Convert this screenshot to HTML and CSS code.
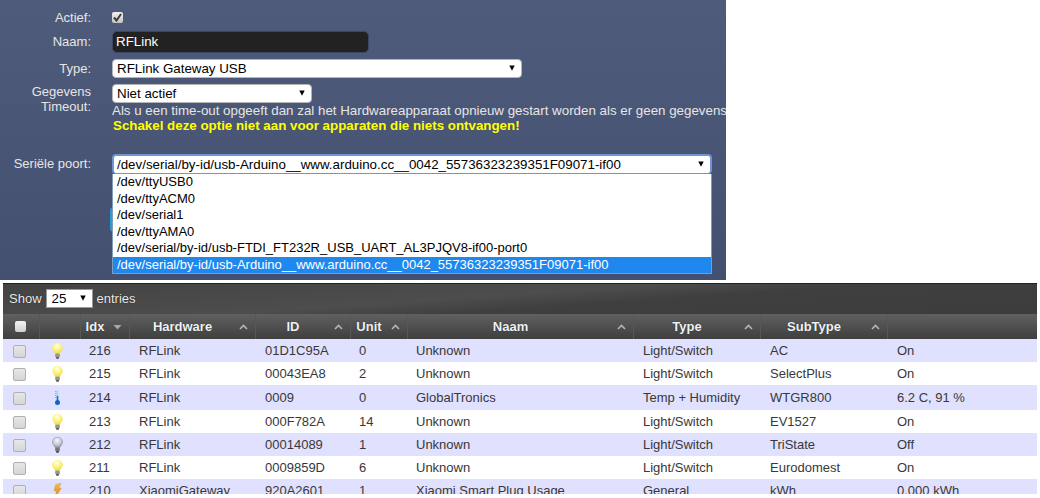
FILE: index.html
```html
<!DOCTYPE html>
<html lang="nl">
<head>
    <meta charset="UTF-8">
    <title>Hardware</title>
    <link rel="stylesheet" href="styles.css">
</head>
<body>
    <svg class="defs" width="0" height="0">
        <defs>
            <radialGradient id="glow-on" cx="45%" cy="30%" r="70%">
                <stop offset="0" stop-color="#fffff2"/>
                <stop offset="0.5" stop-color="#fdf583"/>
                <stop offset="1" stop-color="#efdc3c"/>
            </radialGradient>
            <radialGradient id="glow-off" cx="45%" cy="30%" r="70%">
                <stop offset="0" stop-color="#f4f5f8"/>
                <stop offset="0.6" stop-color="#c9ccd6"/>
                <stop offset="1" stop-color="#9296a6"/>
            </radialGradient>
            <linearGradient id="bolt-fill" x1="0" y1="0" x2="0" y2="1">
                <stop offset="0" stop-color="#f4c04a"/>
                <stop offset="1" stop-color="#e8701a"/>
            </linearGradient>
            <symbol id="bulb-on" viewBox="0 0 11 16">
                <path d="M5.5 0C2.4 0 0.3 2.2 0.3 5 0.3 7.2 2.2 8.4 3.1 10.5H7.9C8.8 8.4 10.7 7.2 10.7 5 10.7 2.2 8.6 0 5.5 0Z" fill="url(#glow-on)"/>
                <rect x="3.2" y="10.5" width="4.6" height="3.7" rx="0.6" fill="#96968a"/>
                <rect x="4" y="14" width="3" height="1.8" rx="0.7" fill="#55554f"/>
            </symbol>
            <symbol id="bulb-off" viewBox="0 0 11 16">
                <path d="M5.5 0.3C2.4 0.3 0.5 2.4 0.5 5 0.5 7.2 2.2 8.4 3.1 10.5H7.9C8.8 8.4 10.5 7.2 10.5 5 10.5 2.4 8.6 0.3 5.5 0.3Z" fill="url(#glow-off)" stroke="#8b8f9c" stroke-width="0.6"/>
                <rect x="3.2" y="10.5" width="4.6" height="3.7" rx="0.6" fill="#74747c"/>
                <rect x="4" y="14" width="3" height="1.8" rx="0.7" fill="#44444a"/>
            </symbol>
            <symbol id="thermo" viewBox="0 0 11 16">
                <rect x="4.7" y="0.5" width="1.6" height="10" fill="#b4d4ee"/>
                <rect x="4.7" y="6" width="1.6" height="5" fill="#1a72c8"/>
                <path d="M3 1.5H4.5M3 3.5H4.5M3 5.5H4.5M3 7.5H4.5" stroke="#6ba5da" stroke-width="0.8"/>
                <circle cx="5.5" cy="12.4" r="2.5" fill="#1265b8"/>
            </symbol>
            <symbol id="bolt" viewBox="0 0 11 16">
                <path d="M3.5 1.5 9 0 7 5H9.5L3 15 4.4 8H2Z" fill="url(#bolt-fill)" stroke="#bfae5a" stroke-width="0.5"/>
            </symbol>
            <symbol id="arrow" viewBox="0 0 6 6">
                <path d="M0.3 0.4H5.7L3 5.8Z" fill="#000"/>
            </symbol>
            <symbol id="sort-up" viewBox="0 0 9 6">
                <path d="M1 5 4.5 1.5 8 5" fill="none" stroke="#b4b4b4" stroke-width="1.6"/>
            </symbol>
            <symbol id="sort-down" viewBox="0 0 9 6">
                <path d="M0.5 1H8.5L4.5 5.5Z" fill="#a8a8a8"/>
            </symbol>
        </defs>
    </svg>

    <div class="form-panel">
        <div class="row row-active">
            <div class="label">Actief:</div>
            <div class="field"><span class="check"><svg width="9" height="9" viewBox="0 0 9 9"><path d="M1 4.5 3.5 7.5 8 1" fill="none" stroke="#3c3c3c" stroke-width="2"/></svg></span></div>
        </div>
        <div class="row row-name">
            <div class="label">Naam:</div>
            <div class="field"><div class="text-input">RFLink</div></div>
        </div>
        <div class="row row-type">
            <div class="label">Type:</div>
            <div class="field"><div class="select select-type">RFLink Gateway USB<svg class="select-arrow"><use href="#arrow"/></svg></div></div>
        </div>
        <div class="row row-timeout">
            <div class="label">Gegevens<br>Timeout:</div>
            <div class="field">
                <div class="select select-timeout">Niet actief<svg class="select-arrow"><use href="#arrow"/></svg></div>
                <p class="help">Als u een time-out opgeeft dan zal het Hardwareapparaat opnieuw gestart worden als er geen gegevens</p>
                <p class="warning">Schakel deze optie niet aan voor apparaten die niets ontvangen!</p>
            </div>
        </div>
        <div class="row row-port">
            <div class="label">Seriële poort:</div>
            <div class="field">
                <div class="select select-port">/dev/serial/by-id/usb-Arduino__www.arduino.cc__0042_55736323239351F09071-if00<svg class="select-arrow"><use href="#arrow"/></svg></div>
                <ul class="port-list">
                    <li>/dev/ttyUSB0</li>
                    <li>/dev/ttyACM0</li>
                    <li>/dev/serial1</li>
                    <li>/dev/ttyAMA0</li>
                    <li>/dev/serial/by-id/usb-FTDI_FT232R_USB_UART_AL3PJQV8-if00-port0</li>
                    <li class="selected">/dev/serial/by-id/usb-Arduino__www.arduino.cc__0042_55736323239351F09071-if00</li>
                </ul>
            </div>
        </div>
        <div class="action-btn"></div>
    </div>

    <div class="devices">
        <div class="toolbar">
            Show
            <div class="length-select">25<svg class="select-arrow"><use href="#arrow"/></svg></div>
            entries
        </div>
        <table>
            <colgroup>
                <col class="c-check"><col class="c-icon"><col class="c-idx"><col class="c-hw"><col class="c-id"><col class="c-unit"><col class="c-name"><col class="c-type"><col class="c-sub"><col>
            </colgroup>
            <thead>
                <tr>
                    <th class="th-check"><span class="head-check"></span></th>
                    <th></th>
                    <th><div class="th-in"><span>Idx</span><svg class="sort"><use href="#sort-down"/></svg></div></th>
                    <th><div class="th-in"><span>Hardware</span><svg class="sort"><use href="#sort-up"/></svg></div></th>
                    <th><div class="th-in"><span>ID</span><svg class="sort"><use href="#sort-up"/></svg></div></th>
                    <th><div class="th-in"><span>Unit</span><svg class="sort"><use href="#sort-up"/></svg></div></th>
                    <th><div class="th-in"><span>Naam</span><svg class="sort"><use href="#sort-up"/></svg></div></th>
                    <th><div class="th-in"><span>Type</span><svg class="sort"><use href="#sort-up"/></svg></div></th>
                    <th><div class="th-in"><span>SubType</span><svg class="sort"><use href="#sort-up"/></svg></div></th>
                    <th></th>
                </tr>
            </thead>
            <tbody>
                <tr class="odd">
                    <td><span class="box"></span></td><td><svg class="icon"><use href="#bulb-on"/></svg></td>
                    <td>216</td><td>RFLink</td><td>01D1C95A</td><td>0</td><td>Unknown</td><td>Light/Switch</td><td>AC</td><td>On</td>
                </tr>
                <tr>
                    <td><span class="box"></span></td><td><svg class="icon"><use href="#bulb-on"/></svg></td>
                    <td>215</td><td>RFLink</td><td>00043EA8</td><td>2</td><td>Unknown</td><td>Light/Switch</td><td>SelectPlus</td><td>On</td>
                </tr>
                <tr class="odd tall">
                    <td><span class="box"></span></td><td><svg class="icon"><use href="#thermo"/></svg></td>
                    <td>214</td><td>RFLink</td><td>0009</td><td>0</td><td>GlobalTronics</td><td>Temp + Humidity</td><td>WTGR800</td><td>6.2 C, 91 %</td>
                </tr>
                <tr>
                    <td><span class="box"></span></td><td><svg class="icon"><use href="#bulb-on"/></svg></td>
                    <td>213</td><td>RFLink</td><td>000F782A</td><td>14</td><td>Unknown</td><td>Light/Switch</td><td>EV1527</td><td>On</td>
                </tr>
                <tr class="odd">
                    <td><span class="box"></span></td><td><svg class="icon"><use href="#bulb-off"/></svg></td>
                    <td>212</td><td>RFLink</td><td>00014089</td><td>1</td><td>Unknown</td><td>Light/Switch</td><td>TriState</td><td>Off</td>
                </tr>
                <tr>
                    <td><span class="box"></span></td><td><svg class="icon"><use href="#bulb-on"/></svg></td>
                    <td>211</td><td>RFLink</td><td>0009859D</td><td>6</td><td>Unknown</td><td>Light/Switch</td><td>Eurodomest</td><td>On</td>
                </tr>
                <tr class="odd">
                    <td><span class="box"></span></td><td><svg class="icon"><use href="#bolt"/></svg></td>
                    <td>210</td><td>XiaomiGateway</td><td>920A2601</td><td>1</td><td>Xiaomi Smart Plug Usage</td><td>General</td><td>kWh</td><td>0.000 kWh</td>
                </tr>
            </tbody>
        </table>
    </div>
</body>
</html>
```
FILE: styles.css
```css
/* Base */
body {
    margin: 0;
    background-color: #fff;
    font-family: "Liberation Sans", Arial, sans-serif;
    font-size: 13px;
}
.defs {
    display: block;
    height: 0;
}
/* Hardware form */
.form-panel {
    width: 726px;
    height: 280px;
    overflow: hidden;
    box-sizing: border-box;
    padding-top: 7px;
    background: linear-gradient(to bottom, #4e5b7a, #43506f);
    color: #e6e6e6;
}
.row {
    display: flex;
}
.label {
    width: 91px;
    flex: none;
    text-align: right;
    line-height: 15px;
}
.field {
    margin-left: 21px;
    flex: 1;
    min-width: 0;
    position: relative;
}
.row-active {
    height: 24px;
}
.row-active .label {
    padding-top: 3px;
}
.check {
    display: flex;
    align-items: center;
    justify-content: center;
    width: 11px;
    height: 11px;
    margin-top: 5px;
    border-radius: 2px;
    background: linear-gradient(to bottom, #f0f0f0, #c4c4c4);
}
.row-name {
    height: 22px;
    margin-bottom: 6px;
}
.row-name .label {
    padding-top: 3px;
}
.text-input {
    box-sizing: border-box;
    width: 257px;
    height: 22px;
    padding: 0 3px;
    border: 1px solid #3c4763;
    border-radius: 5px;
    background-color: #222;
    color: #fff;
    font-size: 13.33px;
    line-height: 20px;
}
.row-type {
    margin-bottom: 6px;
}
.row-type .label {
    padding-top: 2px;
}
.select {
    position: relative;
    box-sizing: border-box;
    height: 19px;
    padding-left: 4px;
    border: 1px solid #b5b5b5;
    border-radius: 4px;
    background-color: #fff;
    color: #000;
    font-size: 13.33px;
    line-height: 17px;
    white-space: nowrap;
}
.select-arrow {
    position: absolute;
    right: 6px;
    top: 5px;
    width: 6px;
    height: 6px;
}
.select-type {
    width: 410px;
}
.select-timeout {
    width: 200px;
}
.help,
.warning {
    margin: 0;
    line-height: 15px;
    white-space: nowrap;
    font-size: 13.33px;
}
.warning {
    padding-left: 1px;
    color: #ffff00;
    font-weight: bold;
}
.row-port {
    margin-top: 21px;
}
.row-port .label {
    padding-top: 2px;
}
.select-port {
    width: 600px;
    height: 20px;
    border: 2px solid #7096d2;
    border-bottom-width: 1px;
    padding-left: 3px;
    line-height: 17px;
}
.port-list {
    position: absolute;
    left: 0;
    top: 20px;
    width: 600px;
    box-sizing: border-box;
    margin: 0;
    padding: 0;
    list-style: none;
    border: 1px solid #7f9db9;
    border-top: 0;
    background-color: #fff;
    color: #000;
    font-size: 13px;
}
.port-list li {
    height: 16.5px;
    padding-left: 4px;
    line-height: 16.5px;
    white-space: nowrap;
}
.port-list .selected {
    background-color: #1e88ef;
    color: #fff;
}
.action-btn {
    width: 80px;
    height: 25px;
    margin: 33px 0 0 110px;
    border-radius: 4px;
    background-color: #2b9bd6;
}
/* Devices table */
.devices {
    width: 1034px;
    height: 211px;
    margin: 3px 0 0 3px;
    overflow: hidden;
}
.toolbar {
    box-sizing: border-box;
    display: flex;
    align-items: center;
    height: 31px;
    padding: 0 0 2px 6px;
    border-top: 1px solid #222;
    background: linear-gradient(176deg, #434343 0%, #4d4d4d 45%, #3f3f3f 60%, #3c3c3c 100%);
    color: #ececec;
    text-shadow: 0 0 1px #111;
}
.length-select {
    position: relative;
    box-sizing: border-box;
    width: 47px;
    height: 19px;
    margin: 0 4px;
    padding-left: 5px;
    border: 1px solid #999;
    background-color: #fff;
    color: #000;
    font-size: 13.33px;
    line-height: 17px;
    text-shadow: none;
}
table {
    width: 1034px;
    table-layout: fixed;
    border-collapse: collapse;
}
.c-check { width: 36px; }
.c-icon { width: 41px; }
.c-idx { width: 49px; }
.c-hw { width: 126px; }
.c-id { width: 95px; }
.c-unit { width: 57px; }
.c-name { width: 226px; }
.c-type { width: 127px; }
.c-sub { width: 127px; }
thead tr {
    height: 25px;
    background: linear-gradient(to bottom, #606060, #3f3f3f);
}
th {
    padding: 0;
    border-right: 1px solid #575757;
    color: #eef2f6;
    font-size: 13px;
    font-weight: bold;
    text-shadow: 0 0 1px #222;
}
th:last-child {
    border-right: 0;
}
.th-in {
    display: flex;
    align-items: center;
}
.th-in span {
    flex: 1;
    padding-left: 1px;
    text-align: center;
    white-space: nowrap;
}
.sort {
    flex: none;
    width: 9px;
    height: 6px;
    margin: 0 7px 0 4px;
}
.head-check {
    display: block;
    width: 11px;
    height: 11px;
    margin-left: 12px;
    border-radius: 2px;
    background: linear-gradient(to bottom, #f2f2f2, #cfcfcf);
}
tbody tr {
    height: 23px;
    background-color: #fff;
}
tbody tr.odd {
    background-color: #e0e0ff;
}
tbody tr.tall {
    height: 25px;
}
td {
    padding: 0 0 0 10px;
    color: #383838;
    font-size: 13px;
    white-space: nowrap;
    overflow: hidden;
}
td:nth-child(1),
td:nth-child(2) {
    padding: 0;
}
td:nth-child(3),
td:nth-child(6),
td:nth-child(7) {
    padding-left: 9px;
}
.box {
    display: block;
    box-sizing: border-box;
    width: 13px;
    height: 13px;
    margin: 1px 0 0 10px;
    border: 1px solid #b0b0b0;
    border-radius: 2px;
    background: linear-gradient(to bottom, #e6e6e6, #d6d6d6);
}
.icon {
    display: block;
    width: 11px;
    height: 16px;
    margin-left: 13px;
}
```
